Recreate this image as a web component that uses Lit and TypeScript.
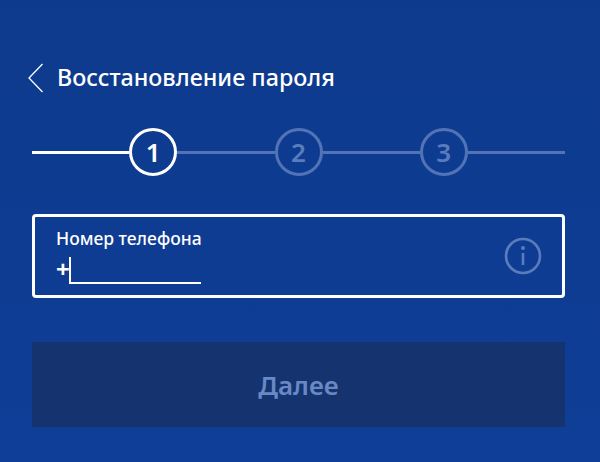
import { LitElement, html, css } from "lit";
import { customElement } from "lit/decorators.js";

@customElement("app-root")
export class AppRoot extends LitElement {
  static styles = css`
    :host {
      display: block;
      width: 600px;
      height: 462px;
      overflow: hidden;
      background: linear-gradient(180deg, #0d3a8c 0%, #0f3e98 100%);
      font-family: "Noto Sans", "Open Sans", sans-serif;
      color: #fff;
    }
    .page {
      box-sizing: border-box;
      height: 462px;
      padding: 64px 35px 0 32px;
      display: flex;
      flex-direction: column;
    }
    .header {
      display: flex;
      align-items: center;
      height: 28px;
      margin-left: -5px;
      gap: 13px;
    }
    .back { width: 17px; height: 30px; flex: none; }
    .title { font-size: 23.3px; font-weight: 500; line-height: 28px; white-space: nowrap; padding-bottom: 2px; }
    .stepper {
      display: flex;
      align-items: center;
      margin-top: 36px;
      height: 48px;
    }
    .line { flex: 1; height: 3px; background: #5274b6; }
    .line.on { background: #fff; }
    .step {
      box-sizing: border-box;
      width: 48px;
      height: 48px;
      border-radius: 50%;
      border: 3px solid #5274b6;
      color: #5a7cbc;
      display: flex;
      align-items: center;
      justify-content: center;
      font-size: 26px;
      font-weight: 600;
      flex: none;
    }
    .step.on { border-color: #fff; color: #fff; }
    .field {
      box-sizing: border-box;
      height: 84px;
      margin-top: 38px;
      border: 3px solid #fff;
      border-radius: 4px;
      padding: 10px 22px 0 21px;
      display: flex;
      align-items: center;
      justify-content: space-between;
    }
    .input-col { align-self: flex-start; }
    .label { font-size: 17.5px; font-weight: 500; line-height: 22px; white-space: nowrap; }
    .row { display: flex; align-items: flex-end; height: 35px; }
    .plus { font-size: 24px; font-weight: 700; line-height: 26px; width: 13px; flex: none; margin-bottom: 2px; }
    .blank {
      box-sizing: border-box;
      width: 132px;
      height: 27px;
      border-left: 2px solid #fff;
      border-bottom: 2px solid #fff;
    }
    .info { width: 38px; height: 38px; flex: none; margin: -10px -2px 0 0; }
    .next {
      margin-top: 44px;
      height: 85px;
      background: #15336f;
      color: #6889c6;
      display: flex;
      align-items: center;
      justify-content: center;
      font-size: 26px;
      font-weight: 600;
    }
  `;

  render() {
    return html`
      <div class="page">
        <div class="header">
          <svg class="back" viewBox="0 0 17 30" fill="none" stroke="#fff" stroke-width="1.3">
            <path d="M15.5 1 L2 15 L15.5 29" />
          </svg>
          <div class="title">Восстановление пароля</div>
        </div>
        <div class="stepper">
          <div class="line on"></div>
          <div class="step on">1</div>
          <div class="line"></div>
          <div class="step">2</div>
          <div class="line"></div>
          <div class="step">3</div>
          <div class="line"></div>
        </div>
        <div class="field">
          <div class="input-col">
            <div class="label">Номер телефона</div>
            <div class="row">
              <div class="plus">+</div>
              <div class="blank"></div>
            </div>
          </div>
          <svg class="info" viewBox="0 0 38 38" fill="none" stroke="#5a7cbc">
            <circle cx="19" cy="19" r="17" stroke-width="2.6" />
            <circle cx="19" cy="11" r="2" fill="#5a7cbc" stroke="none" />
            <path d="M19 16 V28" stroke-width="2.6" />
          </svg>
        </div>
        <div class="next">Далее</div>
      </div>
    `;
  }
}
